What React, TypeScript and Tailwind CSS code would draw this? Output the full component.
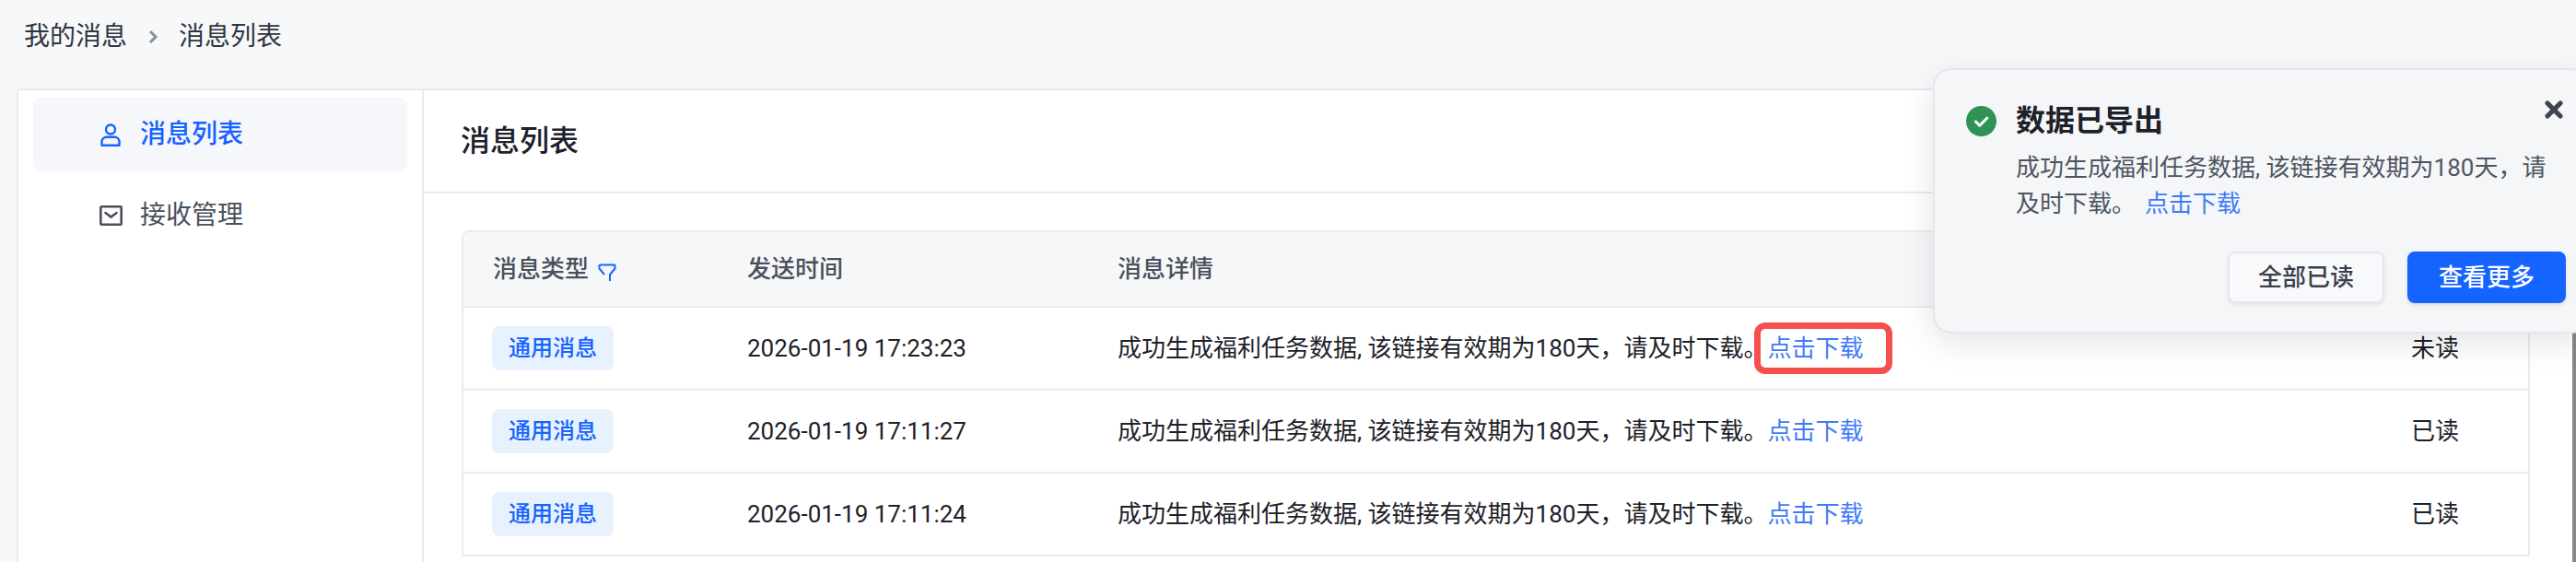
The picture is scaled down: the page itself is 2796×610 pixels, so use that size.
import { X } from "lucide-react"

const rows = [
  { time: "2026-01-19 17:23:23", status: "未读", marked: true },
  { time: "2026-01-19 17:11:27", status: "已读", marked: false },
  { time: "2026-01-19 17:11:24", status: "已读", marked: false },
]

const detail = "成功生成福利任务数据, 该链接有效期为180天，请及时下载。"

const UserIcon = () => (
  <svg width="22" height="25" viewBox="0 0 22 25" fill="none" stroke="#1664ff" strokeWidth="2.4">
    <circle cx="11" cy="6.5" r="5" />
    <path d="M1.5 23.8v-4a5 5 0 0 1 5-5h9a5 5 0 0 1 5 5v4z" strokeLinejoin="round" />
  </svg>
)

const MailIcon = () => (
  <svg width="25" height="22" viewBox="0 0 25 22" fill="none" stroke="#4a505c" strokeWidth="2.6">
    <rect x="1.3" y="1.3" width="22.4" height="19.4" rx="1" />
    <path d="M6.5 8l6 4.5 6-4.5" strokeLinecap="round" />
  </svg>
)

const FilterIcon = () => (
  <svg width="20" height="20" viewBox="0 0 20 20" fill="none" stroke="#1664ff" strokeWidth="2">
    <path d="M13 19V12l5.500-6.500V2.500a1 1 0 0 0-1-1H2.500a1 1 0 0 0-1 1v3L7 12" strokeLinejoin="round" />
  </svg>
)

const SuccessIcon = () => (
  <svg width="33" height="33" viewBox="0 0 33 33" className="shrink-0">
    <circle cx="16.500" cy="16.500" r="16.500" fill="#2f9355" />
    <path d="M10.500 17l4.200 4.200 8-8" fill="none" stroke="#fff" strokeWidth="3" strokeLinecap="round" strokeLinejoin="round" />
  </svg>
)

const Sidebar = () => (
  <aside className="w-[440px] shrink-0 border-r-2 border-[#e7e9f0] px-[16px] pt-[8px] flex flex-col gap-[8px] text-[28px]">
    <div className="h-[80px] rounded-[8px] bg-[#f6f7fa] flex items-center pl-[73px] gap-[21px] text-[#1664ff] font-medium">
      <UserIcon />
      <span>消息列表</span>
    </div>
    <div className="h-[80px] flex items-center pl-[72px] gap-[19px] text-[#4a505c]">
      <MailIcon />
      <span>接收管理</span>
    </div>
  </aside>
)

const Table = () => (
  <div className="ml-[41px] mr-[46px] rounded-t-[8px] border-x-2 border-t-2 border-[#e9ebf0] text-[26px] text-[#1d2129]">
    <div className="h-[82px] grid grid-cols-[276px_402px_1404px_159px] items-center rounded-t-[6px] bg-[#f6f7f9] border-b-2 border-[#e9ebf0] text-[#4a505c] font-medium">
      <div className="pl-[32px] flex items-center gap-[10px]">
        <span>消息类型</span>
        <span className="mt-[8px]">
          <FilterIcon />
        </span>
      </div>
      <div className="pl-[32px]">发送时间</div>
      <div className="pl-[32px]">消息详情</div>
      <div />
    </div>
    {rows.map((row) => (
      <div
        key={row.time}
        className="h-[90px] grid grid-cols-[276px_402px_1404px_159px] items-center border-b-2 border-[#e9ebf0]"
      >
        <div className="pl-[31px]">
          <span className="inline-flex h-[48px] w-[132px] items-center justify-center rounded-[8px] bg-[#e8f1fe] text-[24px] font-medium text-[#1664ff]">
            通用消息
          </span>
        </div>
        <div className="pl-[32px]">{row.time}</div>
        <div className="pl-[32px]">
          {detail}
          <span className="relative inline-block text-[#3f7bf7]">
            点击下载
            {row.marked && (
              <span className="absolute -left-[14px] top-1/2 -translate-y-1/2 h-[56px] w-[150px] rounded-[12px] border-[7px] border-[#f5504e]" />
            )}
          </span>
        </div>
        <div className="pl-[32px]">{row.status}</div>
      </div>
    ))}
  </div>
)

const Toast = () => (
  <div className="absolute left-[2098px] top-[74px] w-[712px] h-[288px] rounded-[20px] border-2 border-[#e4e7ed] bg-[#f5f6f7] shadow-[0_10px_36px_rgba(0,0,0,0.11)] pl-[34px] pr-[23px] pt-[35px]">
    <button className="absolute left-[658px] top-[29px] text-[#3f4450]">
      <X size={28} strokeWidth={4.5} />
    </button>
    <div className="flex items-center gap-[21px]">
      <SuccessIcon />
      <h4 className="text-[32px] leading-[40px] font-bold text-[#1d2129]">数据已导出</h4>
    </div>
    <p className="ml-[54px] mt-[12px] w-[590px] text-[26px] leading-[39px] text-[#4e5562]">
      成功生成福利任务数据, 该链接有效期为180天，请及时下载。<a className="ml-[10px] text-[#3f7bf7]">点击下载</a>
    </p>
    <div className="mt-[32px] flex justify-end gap-[25px] text-[26px] font-medium">
      <button className="h-[56px] w-[170px] rounded-[8px] border-2 border-[#e4e7ed] bg-[#f8f9fb] text-[#3a3f4a] shadow-[0_2px_4px_rgba(0,0,0,0.08)]">
        全部已读
      </button>
      <button className="h-[56px] w-[172px] rounded-[8px] bg-[#1664ff] text-white shadow-[0_2px_4px_rgba(0,0,0,0.12)]">
        查看更多
      </button>
    </div>
  </div>
)

export default function App() {
  return (
    <div className="relative flex h-[610px] w-[2796px] overflow-hidden bg-[#f7f8fa] font-['Roboto','Noto_Sans_CJK_SC',sans-serif]">
      <div className="flex-1 pl-[18px]">
        <nav className="h-[96px] pb-[16px] pl-[8px] flex items-center text-[28px] text-[#2f3540]">
          <span>我的消息</span>
          <svg width="12" height="16" viewBox="0 0 12 16" fill="none" stroke="#868e9c" strokeWidth="3" className="mx-[22px]">
            <path d="M3 2l6 6-6 6" />
          </svg>
          <span>消息列表</span>
        </nav>
        <div className="flex h-[514px] rounded-tl-[4px] border-l-2 border-t-2 border-[#e7e9f0] bg-white">
          <Sidebar />
          <main className="flex-1 min-w-0">
            <div className="h-[112px] border-b-2 border-[#e7e9f0] flex items-center pl-[40px] text-[32px] font-medium text-[#1d2129]">
              消息列表
            </div>
            <div className="pt-[40px]">
              <Table />
            </div>
          </main>
        </div>
      </div>
      <div className="w-[4px] mt-[96px] bg-[#888888]" />
      <Toast />
    </div>
  )
}
